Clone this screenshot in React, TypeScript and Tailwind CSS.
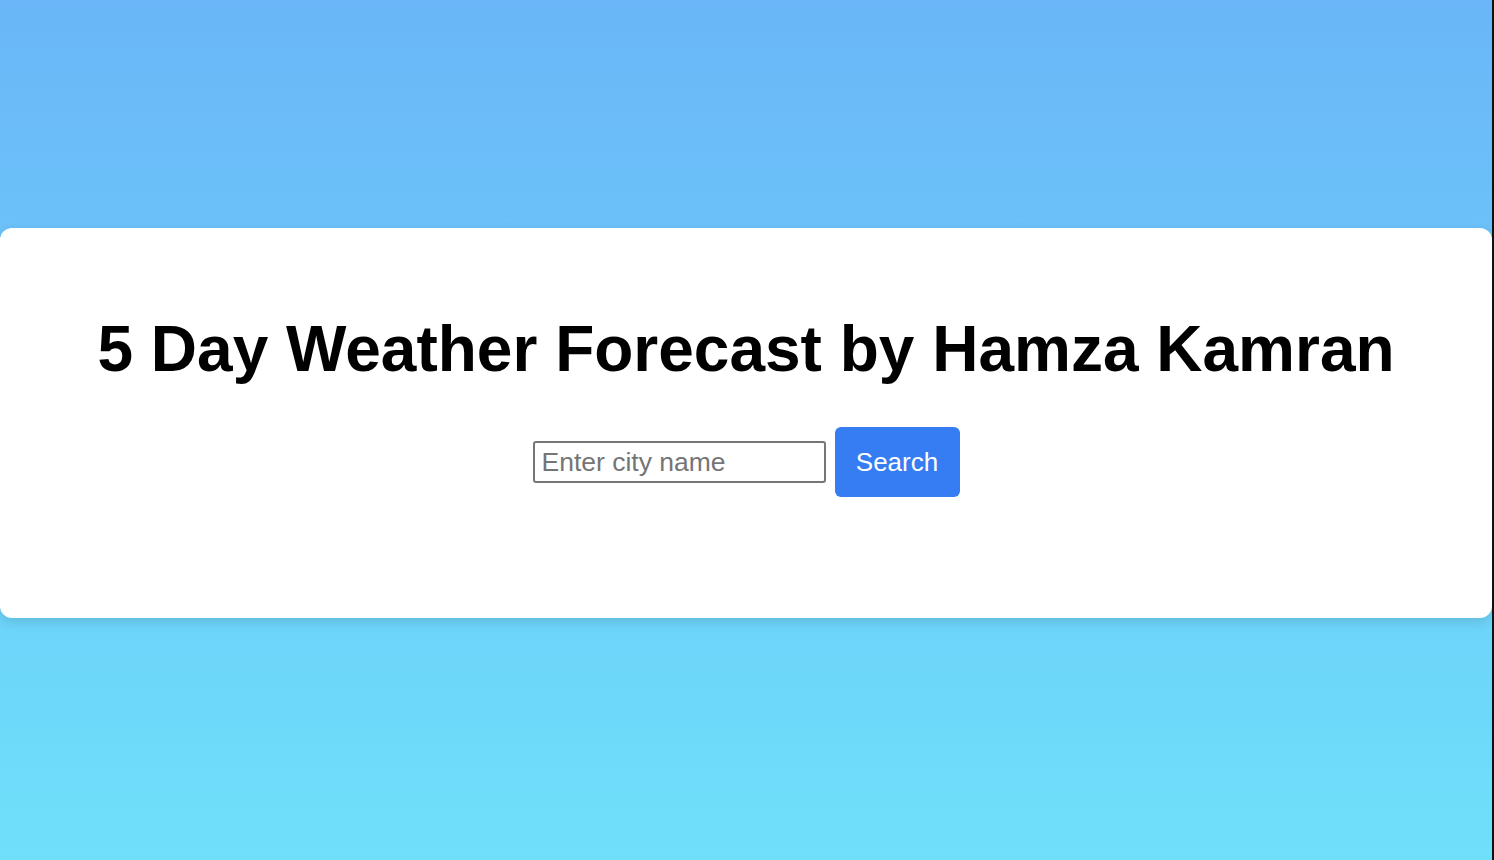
export default function App() {
  return (
    <div className="flex h-[860px] w-full overflow-hidden" style={{ fontFamily: '"Liberation Sans", Arial, sans-serif' }}>
      <div className="flex-1 bg-gradient-to-b from-[#6ab6f8] to-[#6ee0fa] pt-[228px]">
        <div className="flex h-[390px] flex-col items-center rounded-xl bg-white pt-[84px] shadow-[0_4px_12px_rgba(0,0,0,0.12)]">
          <h1 className="text-[64px] font-bold leading-[74px] text-black" style={{ fontFamily: '"Liberation Sans", Arial, sans-serif' }}>
            5 Day Weather Forecast by Hamza Kamran
          </h1>
          <div className="mt-[41px] flex items-center gap-[9px]">
            <input
              type="text"
              placeholder="Enter city name"
              className="h-[42px] w-[293px] rounded-[3px] border-2 border-[#767676] bg-white px-[7px] text-[26.5px] text-black placeholder:text-[#757575] outline-none"
              style={{ fontFamily: '"Liberation Sans", Arial, sans-serif' }}
            />
            <button
              className="h-[70px] w-[125px] rounded-[6px] bg-[#367cf2] text-[26px] text-white"
              style={{ fontFamily: '"Liberation Sans", Arial, sans-serif' }}
            >
              Search
            </button>
          </div>
        </div>
      </div>
      <div className="w-[2px] bg-[#111111]" />
    </div>
  );
}
